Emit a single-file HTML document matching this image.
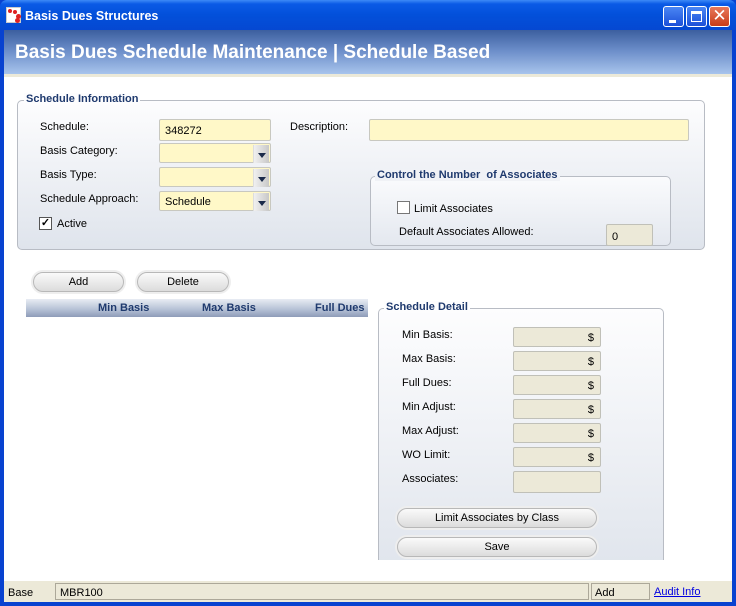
<!DOCTYPE html>
<html><head><style>
*{margin:0;padding:0;box-sizing:border-box}
body{width:736px;height:606px;overflow:hidden;background:#0842d0;font-family:"Liberation Sans",sans-serif;font-size:11px;color:#000;position:relative}
.a{position:absolute}
.title{left:0;top:0;width:736px;height:30px;background:linear-gradient(#3d8af7 0,#0a5ae6 4px,#0350da 50%,#0548d2 100%);border-radius:7px 7px 0 0}
.client{left:4px;top:30px;width:728px;height:572px;background:#fff}
.banner{left:4px;top:30px;width:728px;height:47px;background:linear-gradient(180deg,#3c5f9f 0%,#6a8cc8 45%,#a8c4ec 100%);border-bottom:3px solid #ece9d8}
.grp{border:1px solid #b8bcc4;border-radius:5px;background:linear-gradient(#fdfdfe,#dfe4ec)}
.gt{font-weight:bold;color:#1f3a6e;background:#fdfdfe;padding:0 2px;font-size:11px}
.inp{background:#fff8c8;border:1px solid #c8c8c0;border-radius:2px;height:22px;padding:5px 5px;font-size:11px}
.ro{background:#ece9d8;border:1px solid #c0c0b8;border-radius:2px;height:20px;text-align:right;padding:4px 6px;font-size:11px}
.dd{position:absolute;right:1px;top:1px;width:16px;height:18px;background:linear-gradient(90deg,#f0f0f0,#c8c8c8);border-left:1px solid #ddd}
.dd:after{content:"";position:absolute;left:4px;top:8px;border:4px solid transparent;border-top:5px solid #1a2a4a;border-bottom:0}
.btn{border:1px solid #b8b8b8;border-radius:10px;background:linear-gradient(#fafafa,#dcdcdc);text-align:center;font-size:11px;line-height:19px;box-shadow:0 0 0 2px #eee}
.lbl{font-size:11px}
.wb{top:6px;width:21px;height:21px;border:1px solid #fff;border-radius:3px;background:linear-gradient(#4a86f4,#1c50d8)}
</style></head><body>
<div class="a title"></div>
<div class="a" style="left:6px;top:7px;width:15px;height:16px;background:#fff;border:1px solid #ccc">
<div class="a" style="left:1px;top:1px;width:4px;height:4px;border-radius:2px;background:#d22"></div>
<div class="a" style="left:6px;top:2px;width:4px;height:4px;border-radius:2px;background:#d22"></div>
<div class="a" style="left:9px;top:6px;width:5px;height:5px;border-radius:3px;background:#d22"></div>
<div class="a" style="left:8px;top:10px;width:5px;height:5px;border-radius:3px;background:#d22"></div>
</div>
<div class="a" style="left:25px;top:9px;color:#fff;font-weight:bold;font-size:12.5px">Basis Dues Structures</div>
<div class="a wb" style="left:663px"><div class="a" style="left:5px;top:13px;width:7px;height:3px;background:#fff"></div></div>
<div class="a wb" style="left:686px"><div class="a" style="left:4px;top:4px;width:11px;height:11px;border:1px solid #fff;border-top-width:3px"></div></div>
<div class="a wb" style="left:709px;background:linear-gradient(#e8785a,#c83c18);color:#fff;font-size:17px;line-height:18px;text-align:center">✕</div>
<div class="a client"></div>
<div class="a banner"></div>
<div class="a" style="left:15px;top:42px;color:#fff;font-weight:bold;font-size:19px">Basis Dues Schedule Maintenance | Schedule Based</div>

<div class="a grp" style="left:17px;top:100px;width:688px;height:150px"></div>
<div class="a gt" style="left:24px;top:93px">Schedule Information</div>
<div class="a lbl" style="left:40px;top:121px">Schedule:</div>
<div class="a lbl" style="left:40px;top:145px">Basis Category:</div>
<div class="a lbl" style="left:40px;top:169px">Basis Type:</div>
<div class="a lbl" style="left:40px;top:193px">Schedule Approach:</div>
<div class="a inp" style="left:159px;top:119px;width:112px">348272</div>
<div class="a inp" style="left:159px;top:143px;width:112px;height:20px"><div class="dd"></div></div>
<div class="a inp" style="left:159px;top:167px;width:112px;height:20px"><div class="dd"></div></div>
<div class="a inp" style="left:159px;top:191px;width:112px;height:20px;padding-top:4px">Schedule<div class="dd"></div></div>
<div class="a" style="left:39px;top:217px;width:13px;height:13px;border:1px solid #555;background:#fff;font-size:11px;line-height:11px;text-align:center;font-weight:bold">✓</div>
<div class="a lbl" style="left:57px;top:218px">Active</div>
<div class="a lbl" style="left:290px;top:121px">Description:</div>
<div class="a inp" style="left:369px;top:119px;width:320px"></div>

<div class="a grp" style="left:370px;top:176px;width:301px;height:70px;background:linear-gradient(#fafbfd,#e4e8ef)"></div>
<div class="a gt" style="left:375px;top:169px;background:#f0f2f6">Control the Number&nbsp; of Associates</div>
<div class="a" style="left:397px;top:201px;width:13px;height:13px;border:1px solid #777;background:#fff"></div>
<div class="a lbl" style="left:414px;top:203px">Limit Associates</div>
<div class="a lbl" style="left:399px;top:226px">Default Associates Allowed:</div>
<div class="a ro" style="left:606px;top:224px;width:47px;height:22px;text-align:left;padding:6px 5px">0</div>

<div class="a btn" style="left:33px;top:272px;width:91px;height:20px">Add</div>
<div class="a btn" style="left:137px;top:272px;width:92px;height:20px">Delete</div>
<div class="a" style="left:26px;top:299px;width:342px;height:18px;background:linear-gradient(#e8ecf3,#b4c0d4 60%,#8e9cb8);font-weight:bold;color:#1f3a6e;font-size:11px">
<span class="a" style="left:72px;top:3px">Min Basis</span><span class="a" style="left:176px;top:3px">Max Basis</span><span class="a" style="left:289px;top:3px">Full Dues</span></div>

<div class="a grp" style="left:378px;top:308px;width:286px;height:270px;border-bottom:none;border-radius:5px 5px 0 0"></div>
<div class="a" style="left:370px;top:560px;width:300px;height:22px;background:#fff"></div>
<div class="a gt" style="left:384px;top:301px">Schedule Detail</div>
<div class="a lbl" style="left:402px;top:329px">Min Basis:</div>
<div class="a lbl" style="left:402px;top:353px">Max Basis:</div>
<div class="a lbl" style="left:402px;top:377px">Full Dues:</div>
<div class="a lbl" style="left:402px;top:401px">Min Adjust:</div>
<div class="a lbl" style="left:402px;top:425px">Max Adjust:</div>
<div class="a lbl" style="left:402px;top:449px">WO Limit:</div>
<div class="a lbl" style="left:402px;top:473px">Associates:</div>
<div class="a ro" style="left:513px;top:327px;width:88px">$</div>
<div class="a ro" style="left:513px;top:351px;width:88px">$</div>
<div class="a ro" style="left:513px;top:375px;width:88px">$</div>
<div class="a ro" style="left:513px;top:399px;width:88px">$</div>
<div class="a ro" style="left:513px;top:423px;width:88px">$</div>
<div class="a ro" style="left:513px;top:447px;width:88px">$</div>
<div class="a ro" style="left:513px;top:471px;width:88px;height:22px"></div>
<div class="a btn" style="left:397px;top:508px;width:200px;height:20px">Limit Associates by Class</div>
<div class="a btn" style="left:397px;top:537px;width:200px;height:20px">Save</div>

<div class="a" style="left:4px;top:581px;width:728px;height:21px;background:#ece9d8"></div>
<div class="a lbl" style="left:8px;top:587px">Base</div>
<div class="a" style="left:55px;top:583px;width:534px;height:17px;border:1px solid #aca899;padding:3px 4px">MBR100</div>
<div class="a" style="left:591px;top:583px;width:59px;height:17px;border:1px solid #aca899;padding:3px 3px">Add</div>
<div class="a" style="left:654px;top:586px;color:#0000e0;text-decoration:underline">Audit Info</div>
</body></html>
